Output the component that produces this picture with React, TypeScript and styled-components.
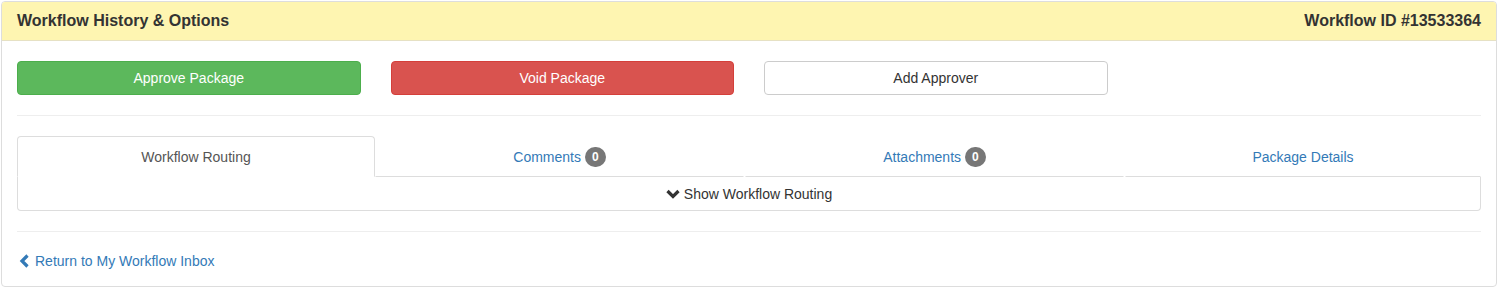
import styled, { createGlobalStyle } from "styled-components";

const GlobalStyle = createGlobalStyle`
  html, body {
    margin: 0;
    padding: 0;
    background: #fff;
    font-family: "Liberation Sans", Arial, Helvetica, sans-serif;
    font-size: 14px;
    line-height: 20px;
    color: #333;
  }
  * {
    box-sizing: border-box;
  }
`;

const Panel = styled.div`
  margin: 1px 2px 0 1px;
  border: 1px solid #dddddd;
  border-radius: 4px;
  background: #fff;
  overflow: hidden;
`;

const Heading = styled.div`
  display: flex;
  justify-content: space-between;
  align-items: center;
  height: 39px;
  padding: 0 15px;
  background: #fef5b1;
  border-bottom: 1px solid #e6e1c4;
`;

const HeadingTitle = styled.h3`
  margin: 0;
  font-size: 16px;
  font-weight: bold;
  color: #333;
`;

const Body = styled.div`
  padding: 20px 15px 15px;
`;

const ButtonRow = styled.div`
  display: grid;
  grid-template-columns: repeat(4, 1fr);
  column-gap: 30px;
`;

type Variant = "success" | "danger" | "default";

const variants: Record<Variant, { bg: string; border: string; color: string }> = {
  success: { bg: "#5cb85c", border: "#4cae4c", color: "#fff" },
  danger: { bg: "#d9534f", border: "#d43f3a", color: "#fff" },
  default: { bg: "#fff", border: "#ccc", color: "#333" },
};

const Button = styled.button<{ $variant: Variant }>`
  height: 34px;
  padding: 6px 12px;
  font-family: inherit;
  font-size: 14px;
  line-height: 20px;
  border-radius: 4px;
  border: 1px solid ${(p) => variants[p.$variant].border};
  background: ${(p) => variants[p.$variant].bg};
  color: ${(p) => variants[p.$variant].color};
  cursor: pointer;
`;

const Rule = styled.hr<{ $bottom?: number }>`
  margin: 20px 0 ${(p) => p.$bottom ?? 20}px;
  border: 0;
  border-top: 1px solid #eee;
`;

const Tabs = styled.ul`
  display: grid;
  grid-template-columns: 358px 370px 380px 1fr;
  margin: 0;
  padding: 0;
  list-style: none;
`;

const Tab = styled.li<{ $active?: boolean }>`
  height: 41px;
  display: flex;
  align-items: center;
  justify-content: center;
  gap: 4px;
  margin-right: ${(p) => (p.$active ? "0" : "1px")};
  border: 1px solid ${(p) => (p.$active ? "#ddd" : "transparent")};
  border-bottom-color: ${(p) => (p.$active ? "transparent" : "#ddd")};
  border-radius: ${(p) => (p.$active ? "4px 4px 0 0" : "0")};
  color: ${(p) => (p.$active ? "#555" : "#337ab7")};
  cursor: pointer;

  &:last-child {
    margin-right: 0;
  }
`;

const Badge = styled.span`
  display: inline-block;
  min-width: 10px;
  padding: 4px 7px;
  font-size: 12px;
  font-weight: bold;
  line-height: 1;
  color: #fff;
  background: #777;
  border-radius: 10px;
  text-align: center;
`;

const TabContent = styled.div`
  height: 34px;
  display: flex;
  align-items: center;
  justify-content: center;
  gap: 4px;
  border: 1px solid #ddd;
  border-top: 0;
  border-radius: 0 0 4px 4px;
  color: #333;
`;

const BackLink = styled.a`
  display: flex;
  width: fit-content;
  height: 20px;
  align-items: center;
  gap: 3px;
  margin-left: 1px;
  color: #337ab7;
  text-decoration: none;
`;

function Chevron({ dir }: { dir: "down" | "left" }) {
  const d = dir === "down" ? "M1.5 4 L7 9.5 L12.5 4" : "M9.5 1.5 L4 7 L9.5 12.5";
  return (
    <svg width="14" height="14" viewBox="0 0 14 14">
      <path d={d} fill="none" stroke="currentColor" strokeWidth="3.2" />
    </svg>
  );
}

export default function App() {
  return (
    <>
      <GlobalStyle />
      <Panel>
        <Heading>
          <HeadingTitle>Workflow History &amp; Options</HeadingTitle>
          <HeadingTitle>Workflow ID #13533364</HeadingTitle>
        </Heading>
        <Body>
          <ButtonRow>
            <Button $variant="success">Approve Package</Button>
            <Button $variant="danger">Void Package</Button>
            <Button $variant="default">Add Approver</Button>
          </ButtonRow>
          <Rule />
          <Tabs>
            <Tab $active>Workflow Routing</Tab>
            <Tab>
              Comments <Badge>0</Badge>
            </Tab>
            <Tab>
              Attachments <Badge>0</Badge>
            </Tab>
            <Tab>Package Details</Tab>
          </Tabs>
          <TabContent>
            <Chevron dir="down" />
            Show Workflow Routing
          </TabContent>
          <Rule $bottom={19} />
          <BackLink href="#">
            <Chevron dir="left" />
            Return to My Workflow Inbox
          </BackLink>
        </Body>
      </Panel>
    </>
  );
}
